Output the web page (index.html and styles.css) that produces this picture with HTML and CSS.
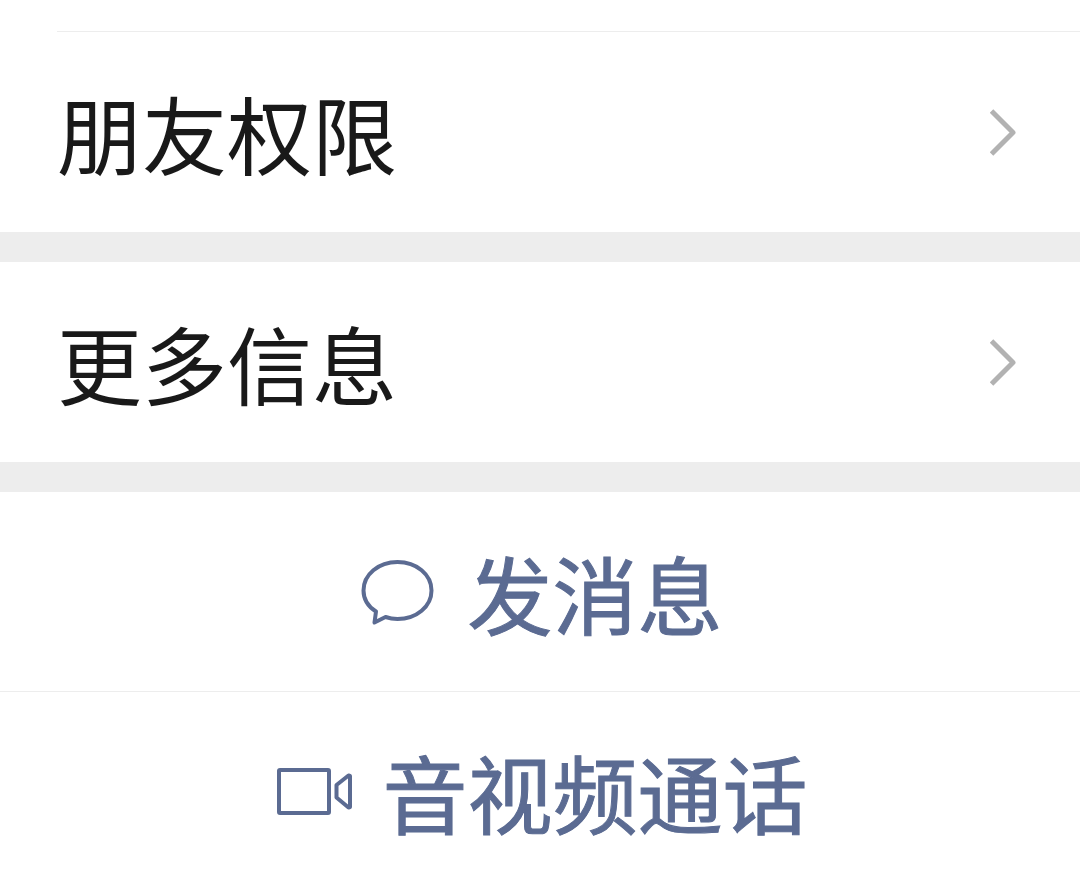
FILE: index.html
```
<!DOCTYPE html>
<html lang="zh-CN">
<head>
   <meta charset="UTF-8">
   <meta name="viewport" content="width=device-width, initial-scale=1.0">
   <title>详细资料</title>
   <link rel="stylesheet" href="styles.css">
</head>
<body>
   <main class="profile">
      <nav class="cells">
         <a class="cell" href="#permission">
            <span>朋友权限</span>
            <svg class="arrow" viewBox="0 0 28 48" aria-hidden="true"><path d="M1.500 3L23 24.500L1.500 46"/></svg>
         </a>
         <a class="cell" href="#more">
            <span>更多信息</span>
            <svg class="arrow" viewBox="0 0 28 48" aria-hidden="true"><path d="M1.500 3L23 24.500L1.500 46"/></svg>
         </a>
      </nav>

      <div class="actions">
         <button class="action" type="button">
            <svg class="icon" viewBox="0 0 80 80" aria-hidden="true">
               <path d="M19 59.5C11 54.500 6.500 47 6.500 38.500C6.500 22.500 21.500 10 40.500 10S74.500 22.500 74.500 38.500S59.500 67 40.500 67C36.300 67 32.300 66.300 28.500 65L17.500 70.500Z"/>
            </svg>
            <span>发消息</span>
         </button>
         <button class="action" type="button">
            <svg class="icon" viewBox="0 0 80 80" aria-hidden="true">
               <rect x="7" y="19" width="50" height="43" rx="1"/>
               <path d="M64.500 34V46.500L76.500 56.500L78 56V25L76.500 24.500Z"/>
            </svg>
            <span>音视频通话</span>
         </button>
      </div>
   </main>
</body>
</html>
```
FILE: styles.css
```
:root {
   --color-text: #191919;
   --color-link: #5b6b92;
   --color-arrow: #b2b2b2;
   --color-line: #ededed;
   --background-gap: #ededed;
}

* { box-sizing: border-box; }

body { margin: 0; background-color: white; color: var(--color-text); font-family: "Noto Sans CJK SC", sans-serif; font-size: 85px; line-height: 100px; }

.profile { padding-top: 31px; }

/* rows with an arrow */
.cell { display: flex; align-items: center; justify-content: space-between; padding: 50px 62px 50px 57px; border-bottom: 30px solid var(--background-gap); color: inherit; text-decoration: none; }
.cells::before { content: ""; display: block; height: 1px; margin-left: 57px; background-color: var(--color-line); }
.arrow { width: 28px; height: 48px; fill: none; stroke: var(--color-arrow); stroke-width: 5; stroke-linejoin: round; }

/* centered buttons */
.action { display: flex; align-items: center; justify-content: center; gap: 30px; width: 100%; padding: 50px 0 49px; border: none; background: none; color: var(--color-link); font: inherit; -webkit-text-stroke: 1px currentColor; cursor: pointer; }
.action + .action { padding: 49px 0 35px; border-top: 1px solid var(--color-line); }
.icon { width: 80px; height: 80px; fill: none; stroke: currentColor; stroke-width: 4; stroke-linejoin: round; }
```
